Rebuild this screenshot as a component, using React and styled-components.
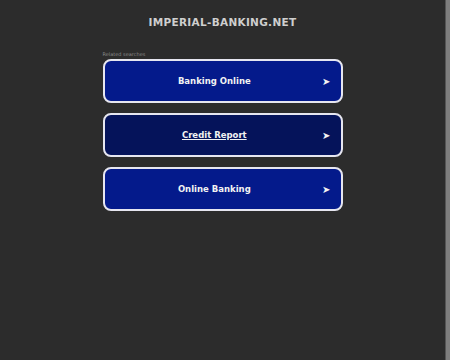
import React from "react";
import styled, { createGlobalStyle } from "styled-components";

const Global = createGlobalStyle`
  html, body { margin: 0; padding: 0; background: #2c2c2c; }
  body { font-family: "DejaVu Sans", "Liberation Sans", sans-serif; }
`;

const Page = styled.div`
  display: flex;
  height: 360px;
  width: 450px;
  overflow: hidden;
`;

const Main = styled.div`
  flex: 1;
  display: flex;
  flex-direction: column;
  align-items: center;
  background: #2c2c2c;
`;

const Scrollbar = styled.div`
  width: 4px;
  border-left: 1px solid #555;
  background: #7e7e7e;
`;

const Title = styled.h1`
  margin: 16px 0 0;
  font-size: 10.5px;
  font-weight: bold;
  letter-spacing: 0.3px;
  color: #cfcfcf;
  line-height: 13px;
`;

const Block = styled.div`
  margin-top: 22px;
  width: 240px;
  display: flex;
  flex-direction: column;
  gap: 10px;
`;

const Related = styled.div`
  font-size: 5px;
  color: #8a8a8a;
  margin-bottom: -8px;
  line-height: 6px;
`;

const Btn = styled.a`
  display: flex;
  align-items: center;
  height: 44px;
  box-sizing: border-box;
  padding: 0 10px 0 2px;
  border: 2px solid #e6e6f0;
  border-radius: 8px;
  background: ${(p) => (p.$dark ? "#05135a" : "#041a8b")};
  color: #f2f2f2;
  font-size: 8.5px;
  font-weight: bold;
`;

const Label = styled.span`
  flex: 1;
  text-align: center;
  text-decoration: ${(p) => (p.$dark ? "underline" : "none")};
`;

const Arrow = styled.span`
  font-size: 10px;
  color: #f2f2f2;
`;

const items = [
  { label: "Banking Online" },
  { label: "Credit Report", dark: true },
  { label: "Online Banking" },
];

export default function App() {
  return (
    <>
      <Global />
      <Page>
        <Main>
          <Title>IMPERIAL-BANKING.NET</Title>
          <Block>
            <Related>Related searches</Related>
            {items.map((it) => (
              <Btn key={it.label} $dark={it.dark}>
                <Label $dark={it.dark}>{it.label}</Label>
                <Arrow>➤</Arrow>
              </Btn>
            ))}
          </Block>
        </Main>
        <Scrollbar />
      </Page>
    </>
  );
}
